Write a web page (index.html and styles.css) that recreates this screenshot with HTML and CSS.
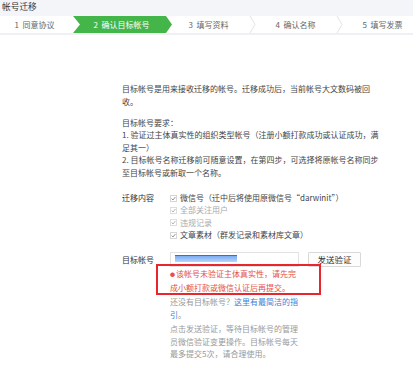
FILE: index.html
```html
<!DOCTYPE html>
<html lang="zh-CN">
<head>
<meta charset="utf-8">
<link rel="stylesheet" href="styles.css">
</head>
<body>
<div class="header">帐号迁移</div>
<div class="steps">
  <div class="step"><span class="num">1</span>同意协议</div>
  <div class="step active"><span class="num">2</span>确认目标帐号</div>
  <div class="step"><span class="num">3</span>填写资料<svg class="sep" viewBox="0 0 7 17" width="7" height="17"><polyline points="1,0 6,8.5 1,17" fill="none" stroke="#e2e3e6" stroke-width="1"/></svg></div>
  <div class="step"><span class="num">4</span>确认名称<svg class="sep" viewBox="0 0 7 17" width="7" height="17"><polyline points="1,0 6,8.5 1,17" fill="none" stroke="#e2e3e6" stroke-width="1"/></svg></div>
  <div class="step"><span class="num">5</span>填写发票</div>
</div>
<main class="content">
  <p class="para">目标帐号是用来接收迁移的帐号。迁移成功后，当前帐号大文数码被回收。</p>
  <p class="para req">目标帐号要求：<br>1. 验证过主体真实性的组织类型帐号（注册小额打款成功或认证成功，满足其一）<br>2. 目标帐号名称迁移前可随意设置，在第四步，可选择将原帐号名称同步至目标帐号或新取一个名称。</p>
  <div class="row migrate">
    <div class="label">迁移内容</div>
    <ul class="items">
      <li class="item"><svg class="chk" viewBox="0 0 7 7" width="7" height="7"><rect x="0.5" y="0.5" width="6" height="6" fill="#fff" stroke="#d6d6d6"/><polyline points="1.6,3.6 3,5 5.4,2" fill="none" stroke="#8a8a8a" stroke-width="0.9"/></svg>微信号（迁中后将使用原微信号“darwinit”）</li>
      <li class="item off"><svg class="chk" viewBox="0 0 7 7" width="7" height="7"><rect x="0.5" y="0.5" width="6" height="6" fill="#fff" stroke="#dedede"/><polyline points="1.6,3.6 3,5 5.4,2" fill="none" stroke="#aaa" stroke-width="0.9"/></svg>全部关注用户</li>
      <li class="item off"><svg class="chk" viewBox="0 0 7 7" width="7" height="7"><rect x="0.5" y="0.5" width="6" height="6" fill="#fff" stroke="#dedede"/><polyline points="1.6,3.6 3,5 5.4,2" fill="none" stroke="#aaa" stroke-width="0.9"/></svg>违规记录</li>
      <li class="item"><svg class="chk" viewBox="0 0 7 7" width="7" height="7"><rect x="0.5" y="0.5" width="6" height="6" fill="#fff" stroke="#d6d6d6"/><polyline points="1.6,3.6 3,5 5.4,2" fill="none" stroke="#8a8a8a" stroke-width="0.9"/></svg>文章素材（群发记录和素材库文章）</li>
    </ul>
  </div>
  <div class="row target">
    <div class="label">目标帐号</div>
    <div class="input"><span class="sel"></span></div>
    <button class="btn">发送验证</button>
  </div>
  <div class="sub">
    <div class="error"><span class="dot">●</span>该帐号未验证主体真实性，请先完成小额打款或微信认证后再提交。</div>
    <p class="hint first">还没有目标帐号？<a class="link">这里有最简洁的指引</a>。</p>
    <p class="hint">点击发送验证，等待目标帐号的管理员微信验证变更操作。目标帐号每天最多提交5次，请合理使用。</p>
  </div>
</main>
</body>
</html>
```

FILE: styles.css
```css
html, body {
  margin: 0;
  padding: 0;
  background: #fff;
  overflow: hidden;
}
body {
  width: 413px;
  height: 385px;
  font-family: "Noto Sans CJK SC", "Liberation Sans", sans-serif;
  font-size: 8px;
  color: #444;
}
.header {
  height: 16px;
  line-height: 14px;
  padding-left: 2px;
  background: #f4f5f9;
  color: #333;
  font-size: 8.7px;
}
.steps {
  display: flex;
  margin-left: -9px;
  height: 17px;
  border-bottom: 2px solid #eff0f3;
  background: #fff;
}
.step {
  position: relative;
  z-index: 0;
  flex: 0 0 87px;
  text-align: center;
  line-height: 18px;
  color: #666;
  font-size: 8px;
}
.num {
  margin-right: 3.5px;
}
.step.active {
  color: #fff;
}
.step.active::before {
  content: "";
  position: absolute;
  z-index: -1;
  left: -5px;
  right: -7px;
  top: 0;
  bottom: 0;
  background: #44b549;
  clip-path: polygon(0 0, calc(100% - 6px) 0, 100% 50%, calc(100% - 6px) 100%, 0 100%, 7px 50%);
}
.sep {
  position: absolute;
  right: -4px;
  top: 0;
}
.content {
  padding: 48px 0 0 122px;
}
.para {
  margin: 0;
  width: 260px;
  line-height: 12.5px;
}
.req {
  margin-top: 8.5px;
}
.row {
  display: flex;
}
.label {
  flex: 0 0 48px;
  color: #333;
}
.migrate {
  margin-top: 13px;
  line-height: 12.3px;
}
.items {
  list-style: none;
  margin: 0;
  padding: 0;
}
.item {
  display: flex;
  align-items: center;
  color: #444;
}
.item.off {
  color: #aaa;
}
.chk {
  flex: 0 0 7px;
  margin-right: 3px;
}
.target {
  margin-top: 11px;
  align-items: center;
}
.input {
  box-sizing: border-box;
  width: 129px;
  height: 15px;
  border: 1px solid #e2e2e2;
  background: #fff;
  padding: 2px 0 0 4px;
}
.sel {
  display: block;
  width: 62px;
  height: 7px;
  background: linear-gradient(#2f70dc 0, #2f70dc 1.5px, #7fb0f3 1.5px, #b9d5f9 100%);
  filter: blur(0.4px);
}
.btn {
  box-sizing: border-box;
  margin-left: 9px;
  width: 53px;
  height: 15px;
  padding: 0;
  border: 1px solid #d9d9d9;
  border-radius: 1px;
  background: #fdfdfd;
  font-family: inherit;
  font-size: 8.5px;
  line-height: 13px;
  color: #333;
}
.sub {
  margin-left: 48px;
  width: 130px;
}
.error {
  position: relative;
  line-height: 13.5px;
  color: #e4504a;
}
.error::after {
  content: "";
  position: absolute;
  left: -14px;
  top: -3px;
  width: 165px;
  height: 31px;
  box-sizing: border-box;
  border: 2px solid #e8262c;
}
.dot {
  font-size: 5px;
  vertical-align: 1px;
  margin-right: 1px;
}
.hint {
  margin: 2px 0 0;
  line-height: 12.5px;
  color: #999;
}
.hint.first {
  margin-top: 2px;
}
.link {
  color: #3b82d9;
  text-decoration: none;
}
```
